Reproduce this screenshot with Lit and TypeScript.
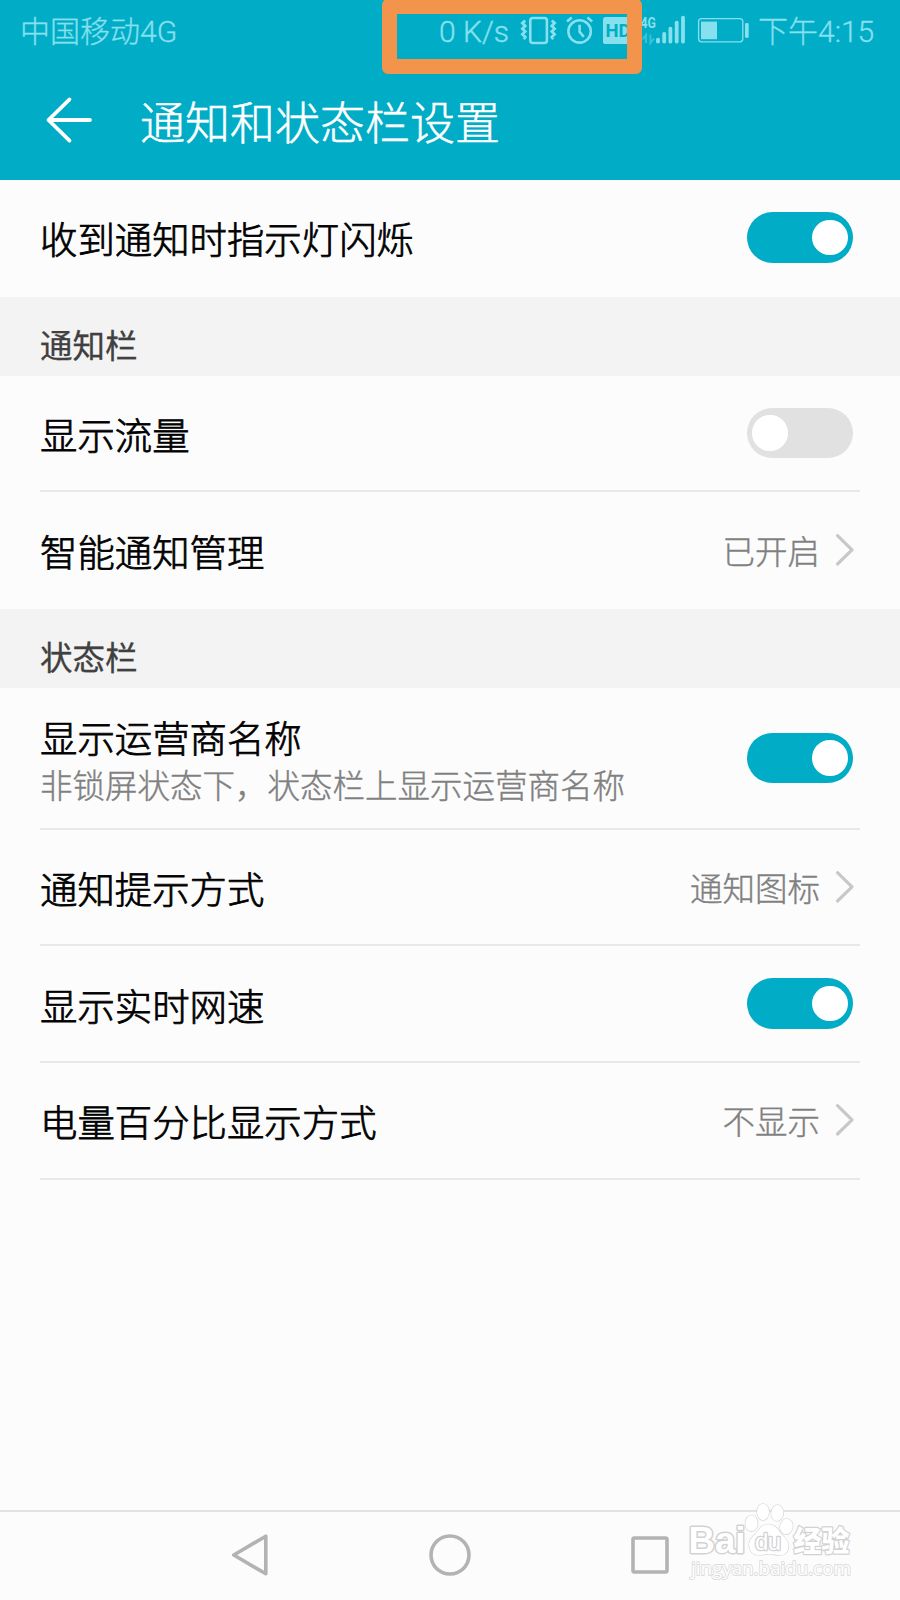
import { LitElement, html, css, svg, nothing } from "lit";
import { customElement, property } from "lit/decorators.js";
import { classMap } from "lit/directives/class-map.js";

@customElement("status-bar")
class StatusBar extends LitElement {
  static styles = css`
    :host {
      display: block;
      position: relative;
      height: 62px;
      color: #86e0ee;
      font: 400 30px/62px Roboto, "Noto Sans CJK SC", sans-serif;
      white-space: nowrap;
    }
    .bar { display: flex; height: 62px; align-items: center; }
    .carrier { width: 419px; padding: 2px 0 0 20px; font-weight: 300; -webkit-text-stroke: 0.3px currentColor; }
    .speed { width: 81px; padding-top: 1px; font-weight: 300; -webkit-text-stroke: 0.4px currentColor; }
    .icons { display: block; width: 238px; height: 62px; flex: none; }
    .time { padding-top: 2px; font-weight: 300; -webkit-text-stroke: 0.3px currentColor; }
    .hd { font: 700 19px Roboto, sans-serif; fill: #00acc6; }
    .net { font: 700 15px Roboto, sans-serif; fill: #86e0ee; }
    .mark {
      position: absolute;
      left: 382.4px;
      top: -1.500px;
      width: 229.500px;
      height: 45px;
      border: 15px solid #f3944d;
      border-radius: 6px;
    }
  `;

  render() {
    const bars = [[658, 37.7], [664.2, 32], [670.4, 26.7], [676.7, 20.8], [683, 15.8]];
    return html`
      <div class="bar">
        <span class="carrier">中国移动4G</span>
        <span class="speed">0 K/s</span>
        <svg class="icons" viewBox="520 0 238 62" fill="none" stroke="#86e0ee">
          <rect x="530.3" y="18" width="16.6" height="25" rx="2.4" stroke-width="2.6" />
          <path d="M525.2 20.500l-2.800 2.600 2.800 2.800-2.800 2.800 2.800 2.800-2.800 2.800 2.800 2.800-1.500 2M551.800 20.500l2.800 2.600-2.800 2.800 2.800 2.800-2.800 2.800 2.800 2.800-2.800 2.800 1.500 2" stroke-width="2.8" />
          <circle cx="579.6" cy="31.4" r="11.2" stroke-width="2.6" />
          <path d="M579.6 24.8v7l4.2 5M567 21.5l4.8-4M592.2 21.5l-4.8-4" stroke-width="2.6" />
          <rect x="603" y="17" width="29" height="27" rx="2.6" fill="#86e0ee" stroke="none" />
          <text class="hd" x="605.500" y="37.4" stroke="none" textLength="25" lengthAdjust="spacingAndGlyphs">HD</text>
          <text class="net" x="640.500" y="27.6" stroke="none" textLength="15.500" lengthAdjust="spacingAndGlyphs">4G</text>
          <path d="M646 43V35l-3.4 4.4M650.4 34.6V43l3.6-4.6" stroke-width="2" opacity=".42" />
          ${bars.map(([x, y]) => svg`<rect x=${x - 1.9} y=${y} width="3.8" height=${43.4 - y} rx="1.7" fill="#86e0ee" stroke="none"/>`)}
          <rect x="698.6" y="18.6" width="44.2" height="23.2" rx="3" stroke-width="1.3" />
          <rect x="701" y="21.6" width="16" height="17.6" fill="#86e0ee" stroke="none" />
          <rect x="745" y="23" width="3.7" height="15" rx="1.4" fill="#86e0ee" stroke="none" />
        </svg>
        <span class="time">下午4:15</span>
      </div>
      <div class="mark"></div>
    `;
  }
}

@customElement("toggle-switch")
class ToggleSwitch extends LitElement {
  @property({ type: Boolean }) on = false;

  static styles = css`
    :host { display: block; }
    .track {
      box-sizing: border-box;
      display: flex;
      align-items: center;
      width: 105.4px;
      height: 50.4px;
      padding: 0 5px;
      border-radius: 26px;
      background: #e1e1e1;
    }
    .track.on { justify-content: flex-end; background: #00acc6; }
    .knob { width: 35.4px; height: 35.4px; border-radius: 50%; background: #fff; }
  `;

  render() {
    return html`<div class=${classMap({ track: true, on: this.on })}><div class="knob"></div></div>`;
  }
}

@customElement("setting-row")
class SettingRow extends LitElement {
  @property() label = "";
  @property() summary = "";
  @property() value = "";
  @property() toggle = "";
  @property({ type: Boolean }) divider = false;

  static styles = css`
    :host { display: block; padding: 0 40px; }
    .row {
      box-sizing: border-box;
      display: flex;
      align-items: center;
      justify-content: space-between;
      height: 116.7px;
      border-bottom: 2px solid transparent;
    }
    .row.tall { height: 141.600px; }
    .row.divider { border-bottom-color: #e8e8e8; }
    .label {
      padding-top: 2px;
      font-size: 37.4px;
      line-height: 48px;
      font-weight: 300;
      color: #000;
      -webkit-text-stroke: 0.75px #000;
    }
    .tall .label { padding-top: 5px; }
    .summary, .value {
      font-size: 32.5px;
      line-height: 46px;
      color: #808080;
      font-weight: 300;
      -webkit-text-stroke: 0.4px #808080;
    }
    .value { display: flex; align-items: center; gap: 15px; padding-right: 5px; }
    .chevron { display: block; width: 20px; height: 34px; }
    .switch { padding-right: 7.400px; }
  `;

  render() {
    return html`
      <div class=${classMap({ row: true, tall: !!this.summary, divider: this.divider })}>
        <div>
          <div class="label">${this.label}</div>
          ${this.summary ? html`<div class="summary">${this.summary}</div>` : nothing}
        </div>
        ${this.toggle
          ? html`<toggle-switch class="switch" ?on=${this.toggle === "on"}></toggle-switch>`
          : html`<div class="value">
              <span>${this.value}</span>
              <svg class="chevron" viewBox="0 0 20 34" fill="none" stroke="#c8c8c8" stroke-width="3.2" stroke-linecap="round" stroke-linejoin="round">
                <path d="M2.5 2.6L17 16.800 2.5 31" />
              </svg>
            </div>`}
      </div>
    `;
  }
}

@customElement("baidu-mark")
class BaiduMark extends LitElement {
  static styles = css`
    :host { display: block; }
    .art { display: block; width: 180px; height: 90px; }
    .latin { font: 700 36px "Liberation Sans", sans-serif; }
    .du { font: 400 24px "Liberation Sans", sans-serif; }
    .han { font: 900 29px "Noto Sans CJK SC", sans-serif; }
    .url { font: 400 19px "Open Sans", sans-serif; }
  `;

  render() {
    return html`
      <svg class="art" viewBox="680 1500 180 90" fill="#fff" stroke="#d2d2d2" stroke-width="1.2" stroke-linejoin="round" paint-order="stroke">
        <text class="latin" x="688.500" y="1553" stroke-width="3" textLength="57" lengthAdjust="spacingAndGlyphs">Bai</text>
        <ellipse cx="751.5" cy="1523.3" rx="6.2" ry="8" />
        <ellipse cx="763" cy="1512" rx="6" ry="8.2" />
        <ellipse cx="777.3" cy="1513" rx="6.1" ry="8" transform="rotate(8 777.3 1513)" />
        <ellipse cx="786.4" cy="1526.6" rx="6.3" ry="7.8" transform="rotate(12 786.4 1526.6)" />
        <path d="M768.5 1524.5c-8 0-10 6-14 10.500-4 4-6.200 6.500-5.200 12 1 5.500 4.700 8 9.700 8 4 0 6-1 9.500-1s7 1.200 11.500 1.200c5.500 0 8.500-4 8.600-8.700.1-6-4-8.500-7-12.500-4-5-6-9.500-13.100-9.500z" />
        <text class="du" x="755" y="1549.5" textLength="26" stroke-width="2.600">du</text>
        <text class="han" x="793.500" y="1551.500" stroke-width="2.4" textLength="56" lengthAdjust="spacingAndGlyphs">经验</text>
        <text class="url" x="691" y="1575" textLength="160" stroke="#dcdcdc" stroke-width="1.8">jingyan.baidu.com</text>
      </svg>
    `;
  }
}

@customElement("app-root")
class AppRoot extends LitElement {
  static styles = css`
    :host {
      display: flex;
      flex-direction: column;
      position: relative;
      width: 900px;
      height: 1600px;
      overflow: hidden;
      background: #fcfcfc;
      font-family: "Noto Sans CJK SC", sans-serif;
    }
    .header { height: 180px; flex: none; background: #00acc6; }
    .title-bar { display: flex; align-items: center; height: 116px; padding-left: 44px; color: #fff; }
    .back { display: block; width: 50px; height: 50px; margin-right: 46px; }
    .title { padding-top: 1px; font-size: 45px; line-height: 60px; font-weight: 300; -webkit-text-stroke: 0.5px #fff; }
    .section {
      box-sizing: border-box;
      height: 79px;
      padding: 24px 40px 0;
      background: #f3f3f3;
      color: #404040;
      font-size: 32.5px;
      line-height: 46px;
      font-weight: 400;
      -webkit-text-stroke: 0.3px #404040;
    }
    .list { flex: 1; }
    .nav {
      box-sizing: border-box;
      display: flex;
      justify-content: space-between;
      align-items: flex-start;
      height: 90px;
      padding: 20px 229px 0;
      border-top: 2px solid #e3e3e3;
    }
    .key { display: block; width: 42px; height: 46px; }
    .watermark { position: absolute; left: 680px; top: 1500px; }
  `;

  render() {
    return html`
      <div class="header">
        <status-bar></status-bar>
        <div class="title-bar">
          <svg class="back" viewBox="44 95 50 50" fill="none" stroke="#fff" stroke-width="3.8" stroke-linecap="round" stroke-linejoin="round">
            <path d="M90 120H48.500M69.500 99.400L48.500 120 69.500 140.600" />
          </svg>
          <span class="title">通知和状态栏设置</span>
        </div>
      </div>
      <div class="list">
        <setting-row label="收到通知时指示灯闪烁" toggle="on"></setting-row>
        <div class="section">通知栏</div>
        <setting-row label="显示流量" toggle="off" divider></setting-row>
        <setting-row label="智能通知管理" value="已开启"></setting-row>
        <div class="section">状态栏</div>
        <setting-row label="显示运营商名称" summary="非锁屏状态下，状态栏上显示运营商名称" toggle="on" divider></setting-row>
        <setting-row label="通知提示方式" value="通知图标" divider></setting-row>
        <setting-row label="显示实时网速" toggle="on" divider></setting-row>
        <setting-row label="电量百分比显示方式" value="不显示" divider></setting-row>
      </div>
      <div class="nav">
        <svg class="key" viewBox="0 0 42 46" fill="none" stroke="#b3b3b3" stroke-width="3.600" stroke-linejoin="round">
          <path d="M36.800 4.200V41.800L4.800 23z" />
        </svg>
        <svg class="key" viewBox="0 0 42 46" fill="none" stroke="#b3b3b3" stroke-width="3.600">
          <circle cx="21" cy="23" r="19" />
        </svg>
        <svg class="key" viewBox="0 0 42 46" fill="none" stroke="#b3b3b3" stroke-width="3.600">
          <rect x="4" y="6" width="34" height="34" rx="1.500" />
        </svg>
      </div>
      <baidu-mark class="watermark"></baidu-mark>
    `;
  }
}
